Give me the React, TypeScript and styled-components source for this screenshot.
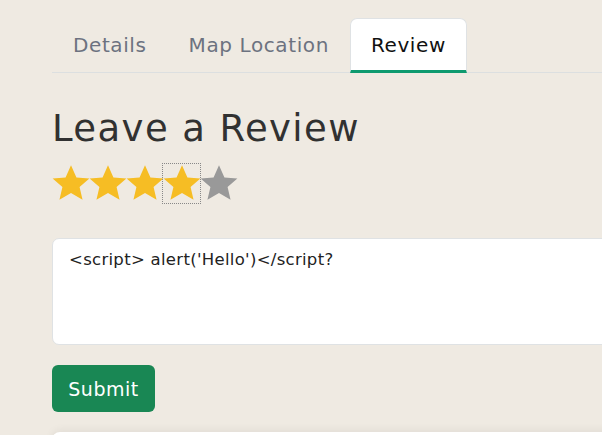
import React, { useState } from "react";
import styled, { createGlobalStyle } from "styled-components";

const Global = createGlobalStyle`
  html, body { margin: 0; padding: 0; background: #efeae2; overflow: hidden; }
  body { font-family: "DejaVu Sans", "Open Sans", sans-serif; }
`;

const Page = styled.div`
  width: 602px;
  height: 435px;
  overflow: hidden;
  padding: 18px 0 0 52px;
  box-sizing: border-box;
`;

const Content = styled.div`
  width: 720px;
  display: flex;
  flex-direction: column;
`;

const TabBar = styled.div`
  display: flex;
  border-bottom: 1px solid #dcdfe0;
  height: 55px;
  box-sizing: border-box;
`;

const Tab = styled.button<{ $active?: boolean }>`
  font-family: "DejaVu Sans", sans-serif;
  font-size: 20px;
  letter-spacing: 0.6px;
  height: 55px;
  padding: 0 20px;
  margin-bottom: -1px;
  border: 1px solid ${(p) => (p.$active ? "#dfe2e4" : "transparent")};
  border-bottom: 3px solid ${(p) => (p.$active ? "#0e9a6f" : "transparent")};
  border-radius: 7px 7px 0 0;
  background: ${(p) => (p.$active ? "#ffffff" : "transparent")};
  color: ${(p) => (p.$active ? "#111" : "#6c7280")};
  cursor: pointer;
  box-sizing: border-box;
`;

const Heading = styled.h1`
  font-family: "DejaVu Sans", sans-serif;
  font-weight: 400;
  font-size: 37px;
  color: #313131;
  margin: 30px 0 0 0;
  line-height: 52px;
  letter-spacing: 1.4px;
`;

const Stars = styled.div`
  display: flex;
  margin-top: 8px;
  height: 40px;
  align-items: center;
`;

const StarBtn = styled.span<{ $focused?: boolean }>`
  width: 37px;
  height: 39px;
  display: flex;
  align-items: center;
  justify-content: center;
  box-sizing: border-box;
  outline: ${(p) => (p.$focused ? "1px dotted #888" : "none")};
  svg { flex-shrink: 0; }
`;

const Textarea = styled.div`
  margin-top: 35px;
  height: 107px;
  background: #fff;
  border: 1px solid #dfe2e4;
  border-radius: 7px;
  padding: 11px 16px;
  box-sizing: border-box;
  font-size: 16.5px;
  letter-spacing: 0.3px;
  color: #222;
  font-family: "DejaVu Sans", sans-serif;
`;

const Submit = styled.button`
  margin-top: 20px;
  align-self: flex-start;
  background: #198754;
  color: #fff;
  border: none;
  border-radius: 6px;
  height: 47px;
  width: 103px;
  padding: 0;
  font-size: 19px;
  letter-spacing: 0.5px;
  font-family: "DejaVu Sans", sans-serif;
`;

const NextCard = styled.div`
  margin-top: 20px;
  height: 40px;
  background: #fff;
  border-radius: 8px;
  box-shadow: 0 -2px 8px rgba(0, 0, 0, 0.06);
`;

const Star = ({ color }: { color: string }) => (
  <svg width="42" height="42" viewBox="0 0 24 24">
    <path
      fill={color}
      d="M12 1.8l3.1 7 7.4.6-5.6 4.9 1.7 7.3L12 17.7 5.4 21.6l1.7-7.3L1.5 9.4l7.4-.6z"
    />
  </svg>
);

export default function App() {
  const [rating] = useState(4);
  return (
    <Page>
      <Global />
      <Content>
        <TabBar>
          <Tab>Details</Tab>
          <Tab>Map Location</Tab>
          <Tab $active>Review</Tab>
        </TabBar>
        <Heading>Leave a Review</Heading>
        <Stars>
          {[1, 2, 3, 4, 5].map((i) => (
            <StarBtn key={i} $focused={i === 4}>
              <Star color={i <= rating ? "#f6bd24" : "#999999"} />
            </StarBtn>
          ))}
        </Stars>
        <Textarea>{"<script> alert('Hello')</script?"}</Textarea>
        <Submit>Submit</Submit>
        <NextCard />
      </Content>
    </Page>
  );
}
